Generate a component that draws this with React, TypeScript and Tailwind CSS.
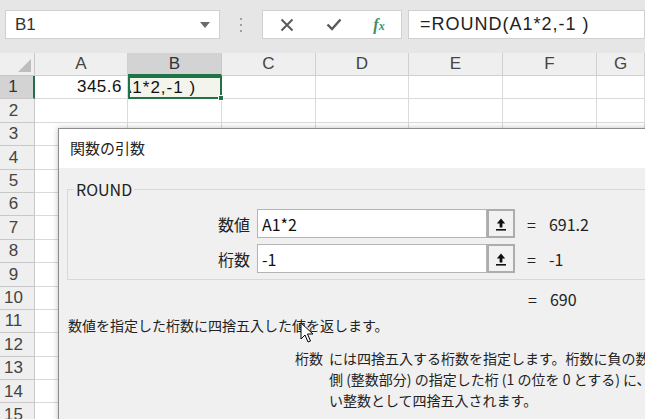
import React from "react";

const cols = [
  { l: "A", w: 93 },
  { l: "B", w: 94 },
  { l: "C", w: 94 },
  { l: "D", w: 93 },
  { l: "E", w: 94 },
  { l: "F", w: 94 },
  { l: "G", w: 48 },
];

const rows = Array.from({ length: 15 }, (_, i) => i + 1);

function UpButton() {
  return (
    <div className="w-[28px] h-[29px] shrink-0 border-2 border-[#adadad] bg-[#f2f2f2] flex items-center justify-center">
      <svg width="12" height="14" viewBox="0 0 12 14">
        <path d="M6 1.5 L1.8 6.5 H4.6 V10.5 H7.4 V6.5 H10.2 Z" fill="#111" />
        <rect x="1" y="12" width="10" height="1.6" fill="#111" />
      </svg>
    </div>
  );
}

export default function App() {
  return (
    <div
      className="relative w-[645px] h-[419px] overflow-hidden bg-white"
      style={{ fontFamily: "'Liberation Sans', 'Noto Sans CJK JP', sans-serif" }}
    >
      {/* formula bar */}
      <div className="h-[53px] bg-[#e6e6e6] flex items-start pt-[10px]">
        <div className="ml-[5px] w-[215px] h-[29px] shrink-0 bg-white border border-[#d0d0d0] flex items-center pl-[9px] pr-[9px]">
          <span className="text-[17px] text-[#333] flex-1">B1</span>
          <svg width="10" height="6" viewBox="0 0 10 6">
            <path d="M0 0 H10 L5 6 Z" fill="#6a6a6a" />
          </svg>
        </div>
        <div className="w-[42px] h-[29px] shrink-0 flex flex-col items-center justify-center gap-[4px]">
          <div className="w-[2px] h-[2px] bg-[#a0a0a0]" />
          <div className="w-[2px] h-[2px] bg-[#a0a0a0]" />
          <div className="w-[2px] h-[2px] bg-[#a0a0a0]" />
        </div>
        <div className="w-[140px] h-[29px] shrink-0 bg-white border border-[#d0d0d0] flex items-center">
          <div className="w-[47px] flex justify-center">
            <svg width="14" height="14" viewBox="0 0 14 14">
              <path d="M1.5 1.5 L12.5 12.5 M12.5 1.5 L1.5 12.5" stroke="#5a5a5a" strokeWidth="2" />
            </svg>
          </div>
          <div className="w-[47px] flex justify-center">
            <svg width="16" height="13" viewBox="0 0 16 13">
              <path d="M1.5 6.5 L6 11 L14.5 1.5" stroke="#5a5a5a" strokeWidth="2.4" fill="none" />
            </svg>
          </div>
          <div className="w-[44px] flex justify-center">
            <span
              className="italic font-bold text-[16px] text-[#3f8f5f]"
              style={{ fontFamily: "'Liberation Serif', serif" }}
            >
              f<span className="text-[12px]">x</span>
            </span>
          </div>
        </div>
        <div className="ml-[6px] flex-1 h-[29px] bg-white border border-[#d0d0d0] flex items-center pl-[11px]">
          <span className="text-[18px] tracking-[1px] text-[#222] whitespace-nowrap">=ROUND(A1*2,-1 )</span>
        </div>
      </div>

      {/* grid */}
      <div className="flex flex-col">
        <div className="flex h-[23px] bg-[#efefef]">
          <div className="w-[35px] shrink-0 border-r border-b border-[#c8c8c8] flex items-end justify-end pr-[3px] pb-[3px]">
            <svg width="13" height="13" viewBox="0 0 13 13">
              <path d="M13 0 V13 H0 Z" fill="#bdbdbd" />
            </svg>
          </div>
          {cols.map((c) => (
            <div
              key={c.l}
              className={
                c.l === "B"
                  ? "shrink-0 flex items-center justify-center text-[17px] text-[#333] bg-[#d3d3d3] border-r border-[#c8c8c8] border-b-2 border-b-[#217346]"
                  : "shrink-0 flex items-center justify-center text-[17px] text-[#444] border-r border-b border-[#d0d0d0]"
              }
              style={{ width: c.w }}
            >
              {c.l}
            </div>
          ))}
        </div>
        {rows.map((r) => (
          <div key={r} className="flex h-[23.4px]">
            <div
              className={
                r === 1
                  ? "w-[35px] shrink-0 flex items-center justify-center pr-[7px] text-[17px] text-[#333] bg-[#d3d3d3] border-b border-[#c8c8c8] border-r-2 border-r-[#217346]"
                  : "w-[35px] shrink-0 flex items-center justify-center pr-[7px] text-[17px] text-[#444] bg-[#efefef] border-r border-b border-[#c8c8c8]"
              }
            >
              {r}
            </div>
            {cols.map((c) => {
              if (r === 1 && c.l === "A") {
                return (
                  <div
                    key={c.l}
                    className="shrink-0 flex items-center justify-end pr-[5px] text-[17px] tracking-[0.5px] text-[#111] border-r border-b border-[#dadada]"
                    style={{ width: c.w }}
                  >
                    345.6
                  </div>
                );
              }
              if (r === 1 && c.l === "B") {
                return (
                  <div
                    key={c.l}
                    className="shrink-0 relative border-2 border-[#217346] bg-[#f3f4ec]"
                    style={{ width: c.w }}
                  >
                    <div className="h-full overflow-hidden flex items-center">
                      <span className="-ml-[10px] text-[17px] tracking-[1px] text-[#111] whitespace-nowrap">A1*2,-1 )</span>
                    </div>
                    <div className="absolute -right-[4px] -bottom-[4px] w-[6px] h-[6px] bg-[#217346] border border-white" />
                  </div>
                );
              }
              return (
                <div
                  key={c.l}
                  className="shrink-0 border-r border-b border-[#dadada]"
                  style={{ width: c.w }}
                />
              );
            })}
          </div>
        ))}
      </div>

      {/* dialog */}
      <div
        className="absolute left-[58px] top-[128px] w-[620px] h-[320px] border border-[#8c8c8c] bg-[#f0f0f0] shadow-[0_0_6px_rgba(0,0,0,0.25)] flex flex-col"
        style={{ fontFamily: "'Noto Sans CJK JP', 'Noto Sans', sans-serif" }}
      >
        <div className="h-[39px] bg-white flex items-center pl-[11px] text-[15px] text-[#222] shrink-0">
          関数の引数
        </div>
        <div className="pl-[8px] pt-[11px]">
          <fieldset className="border border-[#d8d8d8] w-[640px] pb-[6px]">
            <legend className="ml-[6px] px-[2px] text-[16px] text-[#222] leading-[20px]">ROUND</legend>
            <div className="flex flex-col gap-[6px] mt-[10px]">
              <div className="flex items-center h-[29px]">
                <div className="w-[182px] shrink-0 text-right text-[16px] text-[#222]">数値</div>
                <div className="ml-[7px] w-[230px] shrink-0 h-[29px] bg-white border border-[#b4b4b4] flex items-center pl-[4px] text-[16px] text-[#111]">
                  A1*2
                </div>
                <UpButton />
                <div className="ml-[12px] text-[16px] text-[#222]">=</div>
                <div className="ml-[13px] text-[16px] text-[#222]">691.2</div>
              </div>
              <div className="flex items-center h-[29px]">
                <div className="w-[182px] shrink-0 text-right text-[16px] text-[#222]">桁数</div>
                <div className="ml-[7px] w-[230px] shrink-0 h-[29px] bg-white border border-[#b4b4b4] flex items-center pl-[4px] text-[16px] text-[#111]">
                  -1
                </div>
                <UpButton />
                <div className="ml-[12px] text-[16px] text-[#222]">=</div>
                <div className="ml-[13px] text-[16px] text-[#222]">-1</div>
              </div>
            </div>
          </fieldset>
        </div>
        <div className="flex items-center h-[20px] mt-[9px] pl-[469px] text-[16px] text-[#222]">
          <span>=</span>
          <span className="ml-[13px]">690</span>
        </div>
        <div className="mt-[6px] pl-[9px] text-[14px] text-[#222] whitespace-nowrap leading-[20px]">
          数値を指定した桁数に四捨五入した値を返します。
        </div>
        <div className="mt-[13px] flex text-[14px] text-[#222] leading-[21px] whitespace-nowrap">
          <div className="w-[264px] shrink-0 text-right">桁数</div>
          <div className="ml-[6px] shrink-0 flex flex-col">
            <span>には四捨五入する桁数を指定します。桁数に負の数を指定すると、数値は小数点の左</span>
            <span>側 (整数部分) の指定した桁 (1 の位を 0 とする) に、0 を指定すると最も近</span>
            <span>い整数として四捨五入されます。</span>
          </div>
        </div>
      </div>

      {/* mouse cursor */}
      <svg
        className="absolute left-[300px] top-[322px]"
        width="15"
        height="22"
        viewBox="0 0 15 22"
      >
        <path
          d="M1 1 V17 L5 13 L8 20 L10.5 19 L7.5 12 H13 Z"
          fill="white"
          stroke="black"
          strokeWidth="1"
          strokeLinejoin="round"
        />
      </svg>
    </div>
  );
}
